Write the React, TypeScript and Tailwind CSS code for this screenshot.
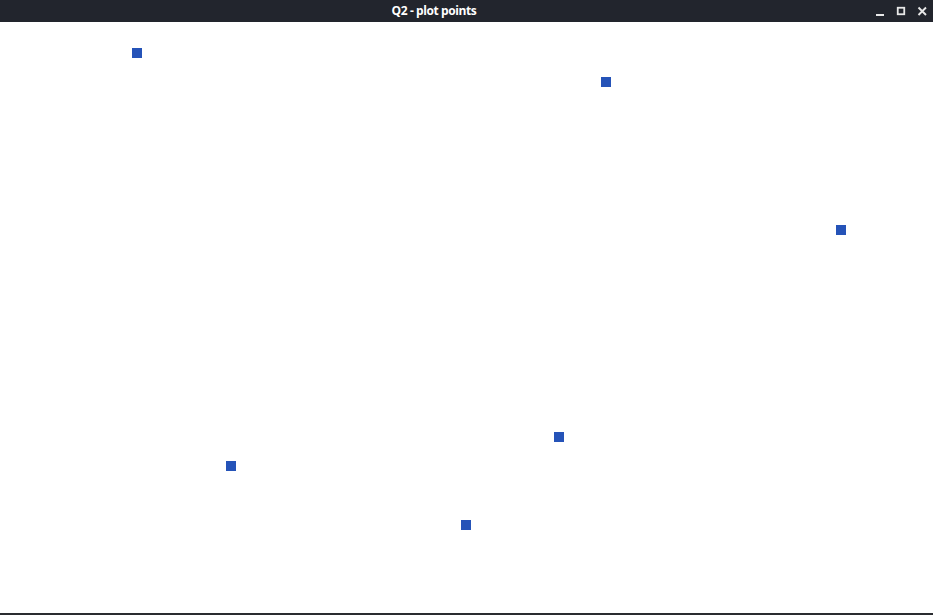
import React from 'react';

const points = [
  { x: 132, y: 26 },
  { x: 601, y: 55 },
  { x: 836, y: 203 },
  { x: 554, y: 410 },
  { x: 226, y: 439 },
  { x: 461, y: 498 },
];

export default function App() {
  return (
    <div className="w-[933px] h-[615px] flex flex-col bg-white overflow-hidden" style={{ fontFamily: '"Open Sans", "DejaVu Sans", sans-serif' }}>
      {/* title bar */}
      <div className="h-[22px] bg-[#22252d] flex items-center shrink-0">
        <div className="flex-1 text-center text-white text-[12px] font-bold leading-none tracking-[-0.4px]">Q2 - plot points</div>
        <div className="w-[65px] h-full flex items-center justify-end gap-[10px] pr-[5px]">
          <svg width="11" height="11" viewBox="0 0 11 11">
            <rect x="1" y="8" width="8" height="2" fill="#e8e8e8" />
          </svg>
          <svg width="11" height="11" viewBox="0 0 11 11">
            <rect x="1.75" y="1.75" width="6.5" height="6.5" fill="none" stroke="#e8e8e8" strokeWidth="1.8" />
          </svg>
          <svg width="11" height="11" viewBox="0 0 11 11">
            <path d="M1.5 1.5 L9 9 M9 1.5 L1.5 9" stroke="#e8e8e8" strokeWidth="1.9" />
          </svg>
        </div>
      </div>

      {/* canvas */}
      <div className="flex-1 relative bg-white border-b-2 border-[#2a2c30]">
        {points.map((p, i) => (
          <div
            key={i}
            className="absolute w-[10px] h-[10px] bg-[#2553b8]"
            style={{ left: p.x, top: p.y }}
          />
        ))}
      </div>
    </div>
  );
}
